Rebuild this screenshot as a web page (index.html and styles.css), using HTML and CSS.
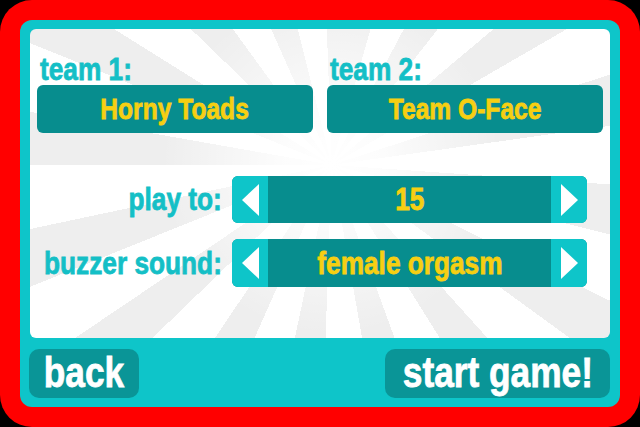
FILE: index.html
```html
<!DOCTYPE html>
<html>
<head>
<meta charset="utf-8">
<link rel="stylesheet" href="styles.css">
</head>
<body>
<div class="frame">
  <div class="inner">
    <div class="panel">
      <div class="teams">
        <div class="team">
          <div class="label"><span class="t">team 1:</span></div>
          <div class="namebox"><span class="t">Horny Toads</span></div>
        </div>
        <div class="team">
          <div class="label"><span class="t">team 2:</span></div>
          <div class="namebox"><span class="t">Team O-Face</span></div>
        </div>
      </div>
      <div class="settings">
        <div class="setlabel"><span class="t">play to:</span></div>
        <div class="stepper">
          <div class="arrow"><svg width="17" height="32" viewBox="0 0 17 32"><polygon points="17,0 17,32 0,16" fill="#fff"/></svg></div>
          <div class="value"><span class="t">15</span></div>
          <div class="arrow"><svg width="17" height="32" viewBox="0 0 17 32"><polygon points="0,0 0,32 17,16" fill="#fff"/></svg></div>
        </div>
        <div class="setlabel"><span class="t">buzzer sound:</span></div>
        <div class="stepper">
          <div class="arrow"><svg width="17" height="32" viewBox="0 0 17 32"><polygon points="17,0 17,32 0,16" fill="#fff"/></svg></div>
          <div class="value"><span class="t">female orgasm</span></div>
          <div class="arrow"><svg width="17" height="32" viewBox="0 0 17 32"><polygon points="0,0 0,32 17,16" fill="#fff"/></svg></div>
        </div>
      </div>
    </div>
    <div class="bottom">
      <div class="btn back"><span class="t">back</span></div>
      <div class="btn start"><span class="t">start game!</span></div>
    </div>
  </div>
</div>
</body>
</html>
```
FILE: styles.css
```css
html, body {
  margin: 0;
  padding: 0;
  background: #000;
}
body {
  width: 640px;
  height: 427px;
  overflow: hidden;
  font-family: "Liberation Sans", Arial, sans-serif;
  font-weight: bold;
}
.t {
  display: inline-block;
  flex: none;
  white-space: nowrap;
  transform: scaleX(0.82);
  transform-origin: center center;
  -webkit-text-stroke: 0.8px currentColor;
}
.frame {
  width: 640px;
  height: 427px;
  box-sizing: border-box;
  background: #ff0000;
  border-radius: 32px;
  padding: 20px;
}
.inner {
  height: 387px;
  box-sizing: border-box;
  background: #0ec5c9;
  border-radius: 12px;
  padding: 9px 10px 0 10px;
  display: flex;
  flex-direction: column;
}
.panel {
  height: 309px;
  box-sizing: border-box;
  border-radius: 6px;
  padding: 25px 7px 0 7px;
  background:
    radial-gradient(circle at 52% 44%, rgba(255,255,255,1) 0, rgba(255,255,255,0.85) 50px, rgba(255,255,255,0) 170px),
    repeating-conic-gradient(from 6deg at 52% 44%, #eeeeee 0deg 10deg, #ffffff 10deg 22deg);
}
.teams {
  display: grid;
  grid-template-columns: 1fr 1fr;
  column-gap: 14px;
}
.label {
  color: #14bfc6;
  font-size: 32px;
  line-height: 30px;
  height: 31px;
  padding-left: 3px;
}
.label .t {
  transform-origin: left center;
}
.namebox {
  height: 48px;
  border-radius: 6px;
  background: #078d8e;
  color: #f6cf12;
  font-size: 30px;
  display: flex;
  align-items: center;
  justify-content: center;
}
.settings {
  margin-top: 43px;
  display: grid;
  grid-template-columns: 185px 355px;
  column-gap: 10px;
  row-gap: 16px;
  align-items: center;
}
.setlabel {
  color: #14bfc6;
  font-size: 32px;
  display: flex;
  justify-content: flex-end;
  white-space: nowrap;
}
.setlabel .t {
  transform-origin: right center;
}
.stepper {
  height: 47px;
  border-radius: 6px;
  overflow: hidden;
  display: grid;
  grid-template-columns: 36px 1fr 36px;
  background: #078d8e;
}
.settings .stepper:last-child {
  height: 48px;
}
.arrow {
  background: #0ec5c9;
  display: flex;
  align-items: center;
  justify-content: center;
}
.value {
  color: #f6cf12;
  font-size: 32px;
  display: flex;
  align-items: center;
  justify-content: center;
}
.bottom {
  display: flex;
  justify-content: space-between;
  padding: 11px 0 0 0;
  margin-left: -1px;
}
.btn {
  height: 49px;
  box-sizing: border-box;
  background: #0a9597;
  border-radius: 10px;
  color: #fff;
  font-size: 43px;
  display: flex;
  align-items: center;
  justify-content: center;
  padding-bottom: 2px;
}
.back {
  width: 110px;
}
.start {
  width: 225px;
}
```
